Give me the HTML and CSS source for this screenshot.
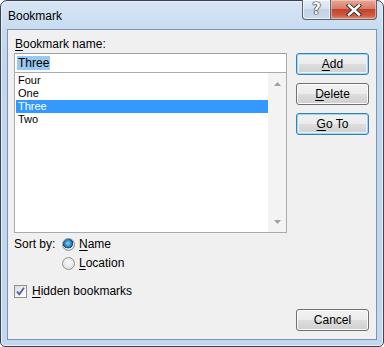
FILE: index.html
```html
<!DOCTYPE html>
<html>
<head>
<meta charset="utf-8">
<link rel="stylesheet" href="styles.css">
</head>
<body>
<div class="window">
  <div class="titlebar">
    <span class="title">Bookmark</span>
    <div class="caption-btns">
      <div class="cbtn help">?</div>
      <div class="cbtn close">
        <svg width="16" height="12" viewBox="0 0 16 12">
          <path d="M3 1.5 L13 10.5 M13 1.5 L3 10.5" stroke="#3a3a3a" stroke-width="4.4" stroke-linecap="square"/>
          <path d="M3 1.5 L13 10.5 M13 1.5 L3 10.5" stroke="#ffffff" stroke-width="2.4" stroke-linecap="square"/>
        </svg>
      </div>
    </div>
  </div>
  <div class="client">
    <div class="left">
      <div class="lbl"><u>B</u>ookmark name:</div>
      <div class="input"><span class="sel">Three</span></div>
      <div class="listbox">
        <div class="items">
          <div class="item">Four</div>
          <div class="item">One</div>
          <div class="item selected">Three</div>
          <div class="item">Two</div>
        </div>
        <div class="scrollbar">
          <svg class="arrow" width="7" height="4" viewBox="0 0 7 4"><path d="M0 4 L3.5 0 L7 4 Z" fill="#a0a0a0"/></svg>
          <svg class="arrow" width="7" height="4" viewBox="0 0 7 4"><path d="M0 0 L3.5 4 L7 0 Z" fill="#a0a0a0"/></svg>
        </div>
      </div>
      <div class="sort">
        <span class="sortlbl">Sort by:</span>
        <div class="radios">
          <div class="opt-row"><span class="radio checked"></span><span><u>N</u>ame</span></div>
          <div class="opt-row"><span class="radio"></span><span><u>L</u>ocation</span></div>
        </div>
      </div>
      <div class="opt-row check-row">
        <span class="checkbox">
          <svg width="11" height="11" viewBox="0 0 11 11"><path d="M2 5.5 L4.3 8.2 L9 1.8" stroke="#4a63a6" stroke-width="1.8" fill="none"/></svg>
        </span>
        <span><u>H</u>idden bookmarks</span>
      </div>
    </div>
    <div class="right">
      <div class="btn default"><span><u>A</u>dd</span></div>
      <div class="btn"><span><u>D</u>elete</span></div>
      <div class="btn default"><span><u>G</u>o To</span></div>
      <div class="btn cancel"><span>Cancel</span></div>
    </div>
  </div>
</div>
</body>
</html>
```
FILE: styles.css
```css
* { box-sizing: border-box; }
html, body { margin: 0; padding: 0; }
body {
  width: 384px;
  height: 347px;
  background: #ffffff;
  font-family: "Liberation Sans", Arial, sans-serif;
  font-size: 12px;
  color: #000;
  overflow: hidden;
}
u { text-decoration: underline; text-underline-offset: 2px; text-decoration-thickness: 1px; }

.window {
  width: 384px;
  height: 347px;
  border: 1px solid #3a4550;
  border-radius: 7px 7px 5px 5px;
  background: linear-gradient(180deg, #d8e6f5 0px, #c8dbf0 28px, #c0d6ee 60px, #c3d8ef 100%);
  padding: 0 6px 6px 6px;
  display: flex;
  flex-direction: column;
  box-shadow: inset 0 0 0 1px #e6f0fa;
}

.titlebar {
  height: 28px;
  display: flex;
  justify-content: space-between;
  align-items: flex-start;
}
.title {
  margin-top: 7px;
  margin-left: 1px;
  font-size: 12px;
  color: #000;
  line-height: 16px;
}
.caption-btns {
  display: flex;
  margin-top: -1px;
}
.cbtn {
  height: 20px;
  border: 1px solid #58636f;
  border-top: none;
}
.help {
  width: 28px;
  border-radius: 0 0 0 4px;
  border-right: none;
  background: linear-gradient(180deg, #e6eef7 0%, #d5e2ef 45%, #c2d2e3 50%, #cddbe9 100%);
  box-shadow: inset 0 0 0 1px rgba(255,255,255,0.6);
  color: #f6f6f6;
  font-family: "DejaVu Sans", sans-serif;
  font-weight: bold;
  font-size: 15px;
  line-height: 19px;
  text-align: center;
  text-shadow: 0 0 1px #333, 0 0 1px #333, 0 0 1px #333, 0 0 1px #333;
}
.close {
  width: 47px;
  border-radius: 0 0 4px 0;
  background: linear-gradient(180deg, #e9a89a 0%, #d87c6a 45%, #c4432e 50%, #d0583f 80%, #e08a6e 100%);
  box-shadow: inset 0 0 0 1px rgba(255,220,210,0.5);
  display: flex;
  align-items: center;
  justify-content: center;
}

.client {
  flex: 1;
  border: 1px solid #7d94b1;
  background: #f0f0f0;
  display: flex;
  gap: 9px;
  padding: 6px 7px 7px 6px;
}

.left {
  width: 273px;
  display: flex;
  flex-direction: column;
}
.lbl {
  height: 17px;
  line-height: 17px;
  padding-left: 1px;
}
.input {
  height: 20px;
  border: 1px solid #a8abb2;
  border-top-color: #9a9ea6;
  background: #fff;
  padding: 2px 0 0 2px;
  line-height: 15px;
}
.sel {
  background: #99c8f0;
  padding: 0 1px;
}
.listbox {
  height: 160px;
  border: 1px solid #a8abb2;
  border-top: none;
  background: #fff;
  display: flex;
  padding: 1px 0 0 1px;
}
.items {
  flex: 1;
}
.item {
  height: 13px;
  line-height: 13px;
  font-size: 11px;
  padding-left: 2px;
}
.item.selected {
  background: #3399ff;
  color: #fff;
}
.scrollbar {
  width: 18px;
  background: #f3f3f3;
  margin-top: -1px;
  display: flex;
  flex-direction: column;
  justify-content: space-between;
  align-items: center;
  padding: 9px 0 8px 0;
}

.sort {
  display: flex;
  margin-top: 3px;
}
.sortlbl {
  width: 48px;
  line-height: 17px;
  height: 17px;
}
.radios {
  display: flex;
  flex-direction: column;
  gap: 2px;
}
.opt-row {
  display: flex;
  align-items: center;
  gap: 4px;
  height: 17px;
  line-height: 17px;
}
.radio {
  width: 13px;
  height: 13px;
  border-radius: 50%;
  border: 1px solid #8f9092;
  background: radial-gradient(circle at 50% 40%, #fbfbfb 0%, #e4e4e4 60%, #d2d2d2 100%);
}
.radio.checked {
  background:
    radial-gradient(circle at 45% 40%, #8fd0f5 0%, #2d8bc6 35%, #0d4a7a 55%, transparent 58%),
    radial-gradient(circle at 50% 40%, #fbfbfb 0%, #e4e4e4 60%, #d2d2d2 100%);
}
.check-row {
  margin-top: 11px;
  gap: 5px;
}
.checkbox {
  width: 13px;
  height: 13px;
  border: 1px solid #8f9092;
  background: linear-gradient(135deg, #dcdcdc 0%, #f4f4f4 60%, #ffffff 100%);
  display: flex;
  align-items: center;
  justify-content: center;
}

.right {
  width: 73px;
  display: flex;
  flex-direction: column;
  gap: 8px;
  padding-top: 17px;
  padding-bottom: 1px;
}
.btn {
  height: 22px;
  border: 1px solid #707070;
  border-radius: 3px;
  background: linear-gradient(180deg, #f2f2f2 0%, #ebebeb 48%, #dddddd 52%, #cfcfcf 100%);
  box-shadow: inset 0 0 0 1px #fbfbfb;
  display: flex;
  align-items: center;
  justify-content: center;
  line-height: 16px;
}
.btn.default {
  border-color: #3c7fb1;
  box-shadow: inset 0 0 0 1px #9fd5f2, inset 0 0 0 2px #e6f4fb;
}
.btn.cancel {
  margin-top: auto;
}
```
